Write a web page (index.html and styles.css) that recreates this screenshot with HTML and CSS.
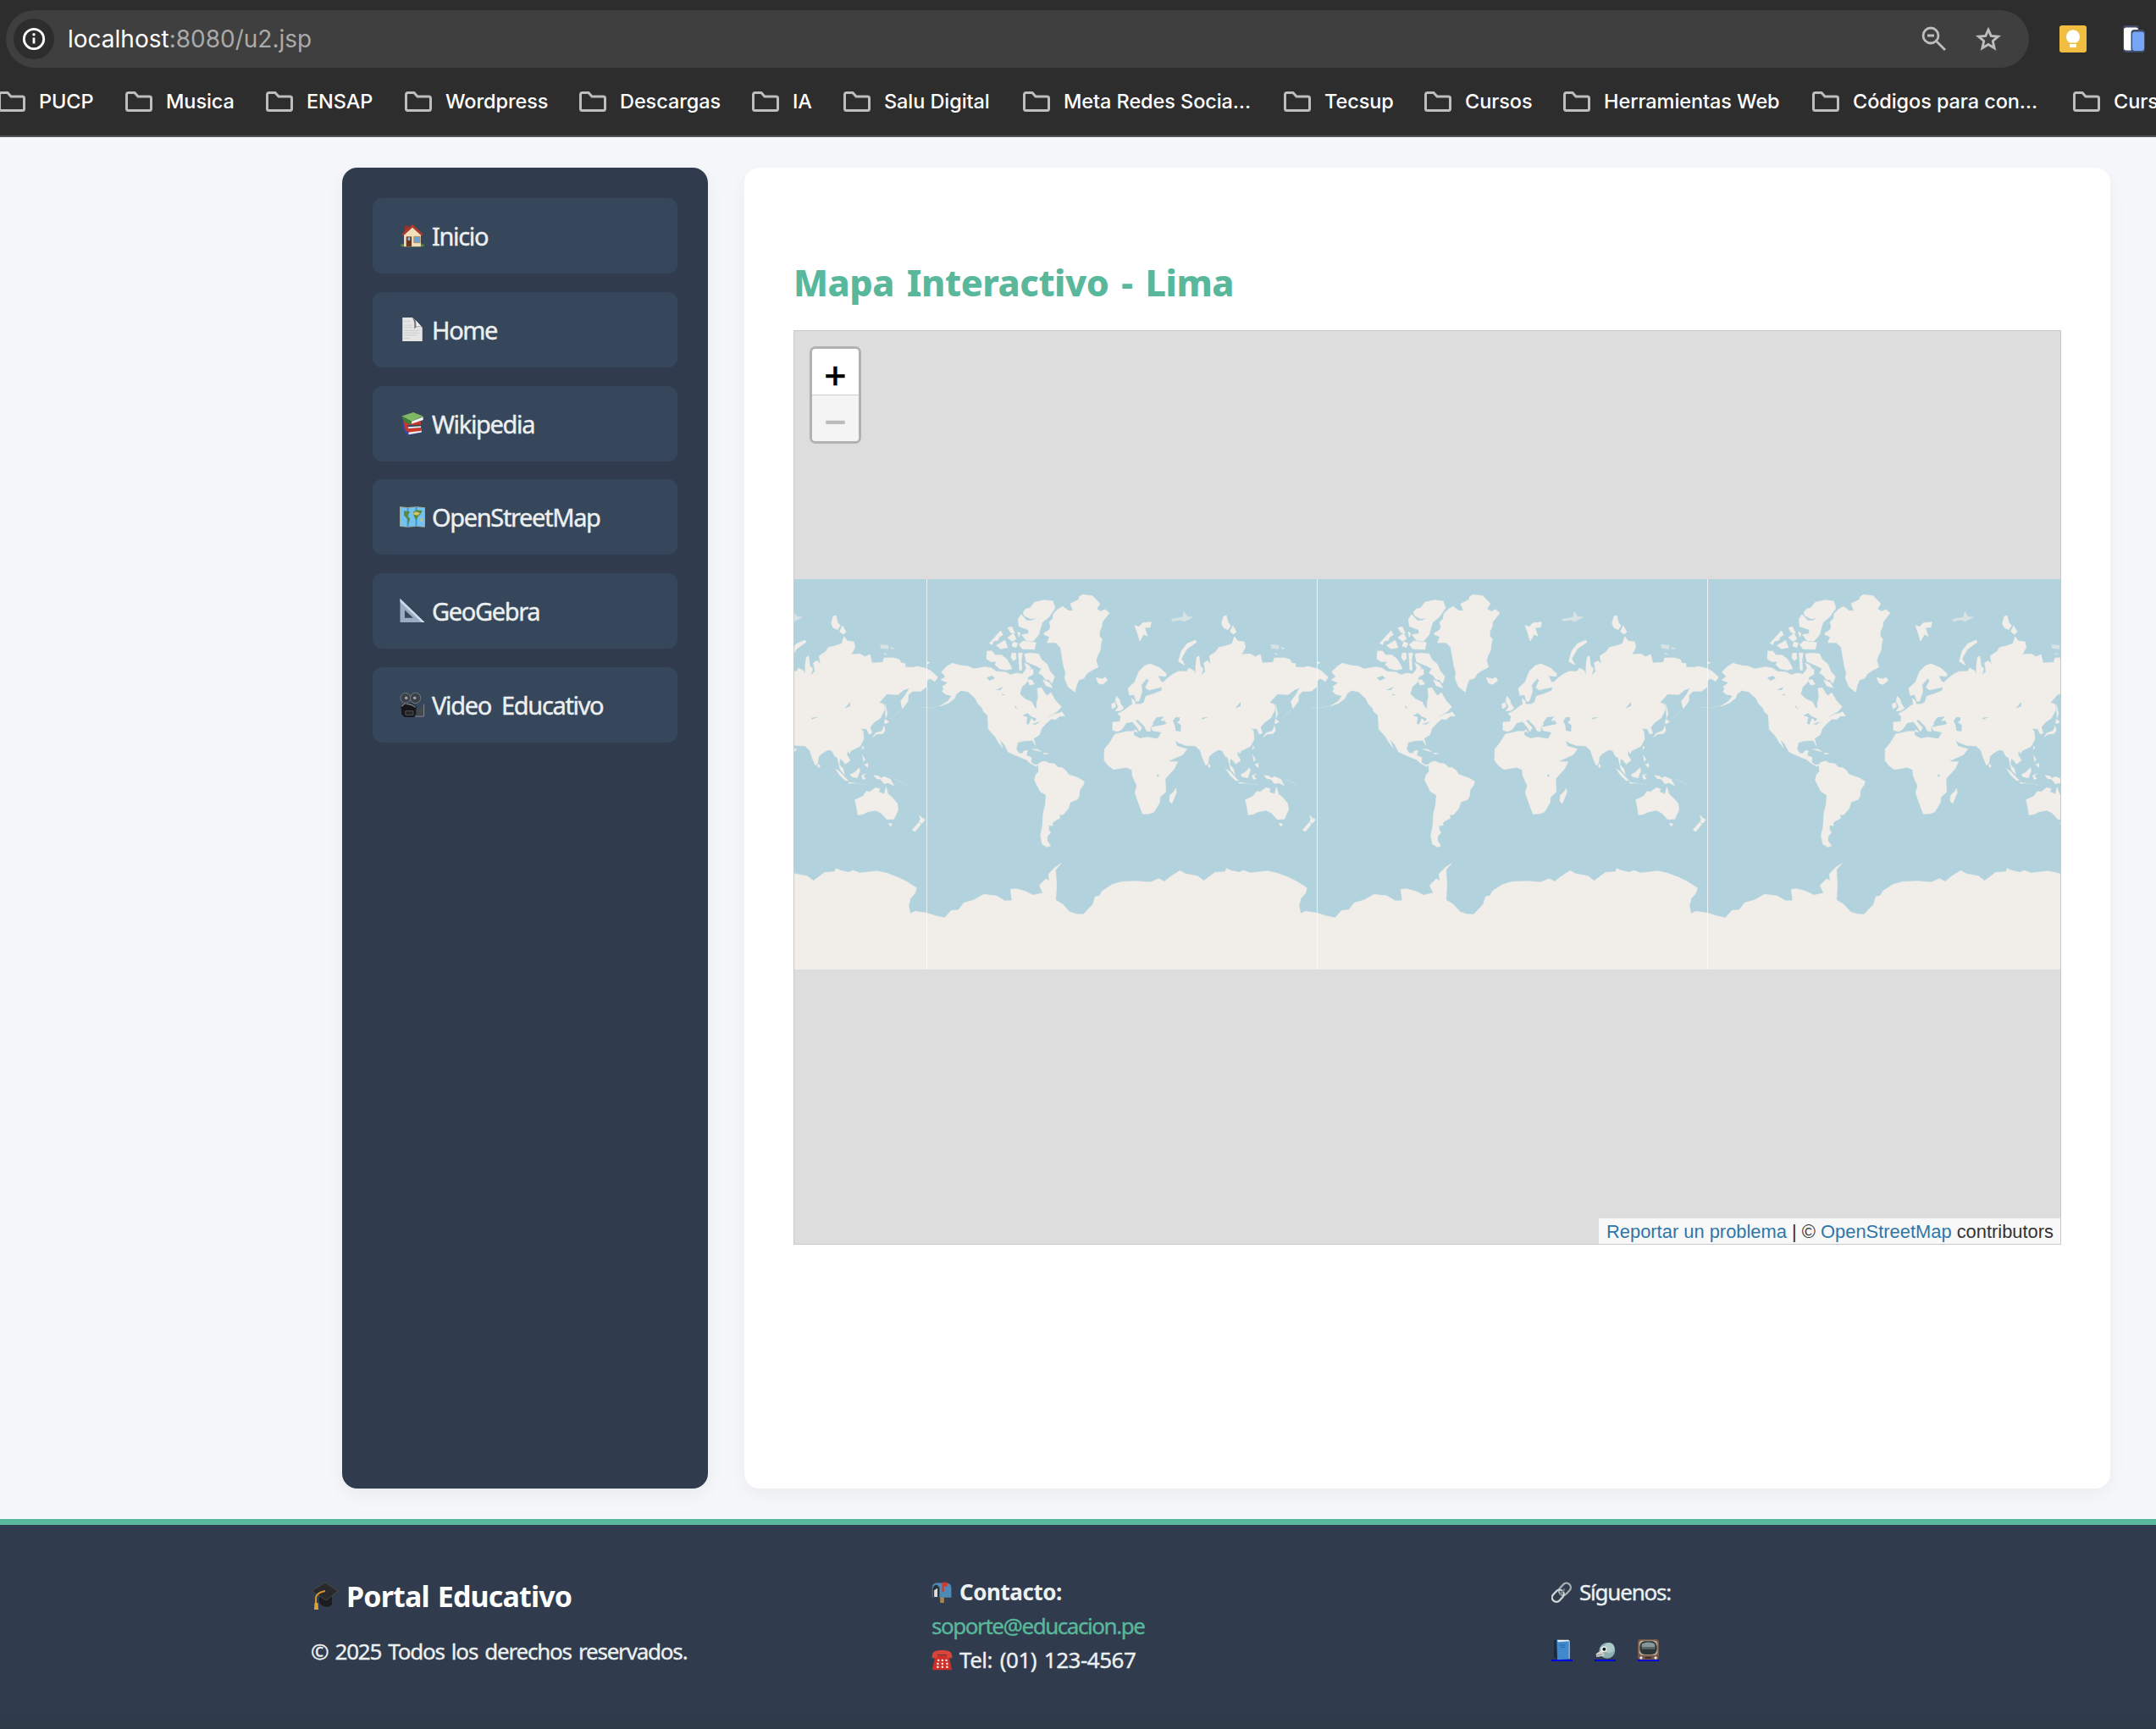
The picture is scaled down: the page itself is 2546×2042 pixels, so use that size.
FILE: index.html
```html
<!DOCTYPE html>
<html lang="es">
<head>
<meta charset="utf-8">
<title>Portal Educativo</title>
<link rel="stylesheet" href="styles.css">
</head>
<body>
<svg class="defs" aria-hidden="true">
  <symbol id="folder" viewBox="0 0 32 24"><path d="M1.5 3.5a2 2 0 0 1 2-2h7.5l4 4.500h13.500a2 2 0 0 1 2 2v12.500a2 2 0 0 1-2 2h-25a2 2 0 0 1-2-2z" fill="none" stroke="#bebebe" stroke-width="3"/></symbol>
</svg>

<header class="browser">
  <div class="toolbar">
    <div class="address">
      <span class="info"><svg width="28" height="28" viewBox="0 0 28 28"><circle cx="14" cy="14" r="11.700" fill="none" stroke="#fff" stroke-width="2.800"/><path d="M14 12.500v7" stroke="#fff" stroke-width="2.800"/><circle cx="14" cy="8.800" r="1.700" fill="#fff"/></svg></span>
      <span class="url"><b>localhost</b>:8080/u2.jsp</span>
      <svg class="lens" width="30" height="30" viewBox="0 0 30 30" fill="none" stroke="#bdbdbd" stroke-width="2.800"><circle cx="11" cy="11" r="9"/><path d="M17.500 17.500 28 28M7 11h8"/></svg>
      <svg class="star" width="32" height="30" viewBox="0 0 32 30"><path d="M16 4.200 19.200 11.400 27.500 12.200 21.300 17.500 23.100 25.800 16 21.500 8.900 25.800 10.700 17.500 4.500 12.200 12.800 11.400z" fill="none" stroke="#bdbdbd" stroke-width="2.900"/></svg>
    </div>
    <svg class="ext" width="32" height="32" viewBox="0 0 32 32"><rect width="32" height="32" rx="3" fill="#f1be42"/><path d="M12 20.500a8.100 8.100 0 1 1 8 0zM12 22h8v4h-8z" fill="#fff"/></svg>
    <svg class="device" width="26" height="32" viewBox="0 0 26 32"><rect x="0" y="0" width="19" height="32" rx="4" fill="#414c69"/><rect x="1" y="2.500" width="17" height="27" rx="3" fill="#fff"/><rect x="9.500" y="5" width="16.500" height="27" rx="4" fill="#414c69"/><rect x="11" y="7.500" width="14" height="22.500" rx="3" fill="#76a6f5"/></svg>
  </div>
  <nav class="bookmarks">
    <span><svg><use href="#folder"/></svg>PUCP</span>
    <span><svg><use href="#folder"/></svg>Musica</span>
    <span><svg><use href="#folder"/></svg>ENSAP</span>
    <span><svg><use href="#folder"/></svg>Wordpress</span>
    <span><svg><use href="#folder"/></svg>Descargas</span>
    <span><svg><use href="#folder"/></svg>IA</span>
    <span><svg><use href="#folder"/></svg>Salu Digital</span>
    <span><svg><use href="#folder"/></svg>Meta Redes Socia…</span>
    <span><svg><use href="#folder"/></svg>Tecsup</span>
    <span><svg><use href="#folder"/></svg>Cursos</span>
    <span><svg><use href="#folder"/></svg>Herramientas Web</span>
    <span><svg><use href="#folder"/></svg>Códigos para con…</span>
    <span><svg><use href="#folder"/></svg>Curs</span>
  </nav>
</header>

<div class="layout">
  <aside class="sidebar">
    <a class="item"><svg viewBox="0 0 32 32"><path d="M1 27h30v3H1z" fill="#5d8a3a"/><path d="M6 3h5v9H6z" fill="#9a3226"/><path d="M5 15 16 5l11 10v15H5z" fill="#f0dfb8"/><path d="M16 1 30 14l-2 2L16 5 4 16l-2-2z" fill="#b5392f"/><path d="M8 17h7v13H8z" fill="#6b3424"/><path d="M10 18h3v4h-3z" fill="#86bdea"/><path d="M18 17h8v8h-8z" fill="#719fd0" stroke="#ac8e65"/></svg>Inicio</a>
    <a class="item"><svg viewBox="0 0 32 32"><path d="M3 0h13l13 13v18H3z" fill="#e5e5e5"/><path d="M16 0l13 13c-4-2-8-1-11 2 1-5 1-10-2-15z" fill="#777"/><path d="M20 3l8 9c-3-1-5-1-7 0 0-3 0-6-1-9z" fill="#f3f3f3"/><path d="M5 5h8M5 10h11M5 13h11M5 17h20M5 20h20M5 23h16M5 27h8" stroke="#cacaca"/></svg>Home</a>
    <a class="item"><svg viewBox="0 0 32 32"><path d="M2 14l4 15 5 2 17-3v-3z" fill="#36479a"/><path d="M11 27l17-4v4l-17 3z" fill="#eee"/><path d="M4 12l3 12 4 3 17-2v-4l-17 1-2-4 18-1v-4z" fill="#c9372b"/><path d="M10 20l17-1v2l-16 1z" fill="#eee"/><path d="M2 6 17 1l13 5-15 7z" fill="#80b866"/><path d="M2 6l3 7 8 4 2-1V13z" fill="#3f7e39"/><path d="M15 13l15-6v4l-15 5z" fill="#f5f5f5"/></svg>Wikipedia</a>
    <a class="item"><svg viewBox="0 0 32 32"><path d="M0 3l10 1 11-1 11 1v25l-11-1-11 1-10-1z" fill="#72c3f0" stroke="#a7ae9b"/><path d="M10 4v25M21 3v25" stroke="#3c94cc" stroke-width="2"/><path d="M5 8l8 1-4 6 4 3-2 8-2-8-4-4zM17 10l4-3 8 1-3 5-3 3-2 5-3-6z" fill="#5d873e"/><path d="M17 11l4-2 5 2-3 3-5-1zM26 19l3-1v4h-2z" fill="#d8c568"/></svg>OpenStreetMap</a>
    <a class="item"><svg viewBox="0 0 32 32"><path fill-rule="evenodd" d="M0 0l32 31H0zM6 15v10h11z" fill="#9aabc2"/><path d="M0 0l32 31h-4L0 4z" fill="#cddaea"/></svg>GeoGebra</a>
    <a class="item"><svg viewBox="0 0 32 32"><circle cx="7" cy="7" r="6.500" fill="#3a4045" stroke="#798087"/><circle cx="20" cy="7" r="6.800" fill="#3a4045" stroke="#798087"/><circle cx="8" cy="7" r="2" fill="#9aa1a7"/><circle cx="19" cy="7" r="2" fill="#9aa1a7"/><path d="M1 18l4-5 10 1 6 4v9l-3 5H6l-4-4z" fill="#17171a"/><path d="M2 18l4-4 9 2 5 3" fill="none" stroke="#7c8288" stroke-width="1.500"/><path d="M7 24h10v5H7z" fill="#242427" stroke="#55585c"/><path d="M21 21l4 1 6-7v16H21l4-4h-4z" fill="#43484d"/><path d="M31 15v16H20" fill="none" stroke="#888e94"/></svg>Video Educativo</a>
  </aside>

  <main class="content">
    <h2>Mapa Interactivo - Lima</h2>
    <div class="map">
      <svg class="world" width="1495" height="461" viewBox="0 0 1495 461">
        <defs>
          <g id="tile">
            <rect width="461.200" height="461" fill="#b2d2dd"/>
            <g transform="scale(.33333) translate(-43 -43)" fill="#f1eee9" stroke="#f1eee9" stroke-width="2" stroke-linejoin="round">
              <path d="M95 372 L115 352 L133 341 L168 350 L188 351 L210 361 L250 354 L272 358 L290 370 L322 372 L340 382 L362 376 L382 380 L392 366 L400 352 L410 365 L420 362 L420 380 L402 390 L398 408 L380 425 L373 450 L392 468 L415 478 L428 502 L433 500 L433 480 L438 462 L435 430 L450 428 L460 445 L470 456 L483 445 L500 474 L510 485 L520 495 L505 512 L480 525 L466 537 L492 522 L512 518 L522 513 L532 528 L515 528 L500 540 L485 538 L465 555 L450 572 L442 595 L422 607 L428 632 L418 614 L385 616 L365 622 L360 645 L370 660 L382 661 L388 652 L400 650 L396 668 L414 675 L412 692 L425 701 L438 700 L430 706 L410 695 L395 682 L360 668 L332 655 L318 628 L300 610 L312 640 L298 622 L285 600 L262 575 L259 525 L244 512 L240 500 L225 485 L215 465 L190 442 L165 437 L148 450 L142 465 L120 482 L90 493 L118 476 L132 456 L108 450 L98 440 L105 430 L98 425 L118 410 L94 400 L110 388Z"/>
              <path d="M438 700 L445 692 L462 688 L475 695 L495 697 L508 710 L522 711 L535 720 L545 735 L580 747 L601 760 L598 772 L585 790 L583 812 L576 824 L552 833 L545 855 L527 877 L512 878 L515 890 L495 900 L488 908 L490 916 L475 915 L475 930 L482 940 L470 955 L470 970 L482 988 L470 992 L452 982 L446 950 L453 920 L456 870 L463 845 L466 808 L445 795 L435 775 L425 755 L430 735 L440 725Z"/>
              <path d="M458 235 L478 222 L482 210 L477 195 L490 183 L492 165 L510 148 L525 140 L545 155 L562 155 L552 130 L582 115 L583 106 L595 98 L630 102 L657 130 L645 148 L660 158 L675 150 L690 163 L665 195 L663 212 L655 230 L655 245 L664 255 L660 275 L658 295 L648 315 L643 330 L650 355 L630 365 L610 378 L600 394 L582 400 L574 418 L568 443 L545 425 L532 395 L535 375 L528 350 L517 285 L500 268 L470 268 L478 247 L460 240Z"/>
              <path d="M385 160 L395 148 L410 145 L425 125 L460 117 L490 121 L498 145 L475 178 L453 195 L445 220 L440 240 L420 263 L395 260 L380 240 L405 236 L403 222 L370 210 L367 185 L378 168 L398 190 L415 190 L435 180 L410 183 L388 172Z"/>
              <path d="M265 270 L305 226 L313 240 L300 248 L295 260 L280 262 L275 275Z M290 278 L320 260 L330 285 L305 290Z M330 215 L345 212 L355 235 L340 232Z M330 250 L350 235 L360 255 L345 263Z M350 265 L365 270 L360 285 L345 280Z M370 275 L385 262 L430 268 L425 292 L382 290Z M365 230 L375 235 L370 248Z M257 298 L275 298 L285 312 L308 312 L325 325 L335 340 L345 360 L325 365 L300 360 L285 345 L292 335 L270 335 L255 325Z M345 305 L358 305 L360 325 L350 332 L342 320Z M368 305 L382 305 L378 330 L380 365 L372 365Z M390 308 L410 305 L440 308 L450 328 L470 345 L480 370 L496 388 L487 412 L475 398 L465 400 L455 385 L440 375 L450 360 L430 350 L395 335Z M400 400 L415 400 L424 415 L408 418Z M455 400 L478 410 L488 428 L465 420Z M390 340 L405 348 L415 362 L395 355Z"/>
              <path d="M643 392 L665 397 L676 390 L683 402 L665 416 L651 411Z M780 207 L795 212 L808 198 L838 195 L835 213 L815 215 L825 245 L812 238 L798 262 L790 235Z M935 335 L945 298 L965 272 L995 259 L999 266 L965 290 L952 312 L945 325 L957 347Z M1088 200 L1095 175 L1105 172 L1110 195 L1120 208 L1110 222 L1095 215Z M1118 228 L1128 208 L1140 230 L1130 238Z"/>
              <path d="M910 185 L950 178 L955 158 L965 175 L985 178 L955 193 L940 187 L915 192Z M1262 275 L1290 278 L1290 290 L1265 288Z M1298 284 L1312 289 L1302 291Z M1275 305 L1286 310 L1277 310Z" opacity=".6"/>
              <path d="M756 430 L780 408 L795 370 L815 350 L835 343 L852 350 L870 358 L892 378 L890 388 L862 384 L872 405 L882 410 L877 425 L845 432 L830 436 L818 427 L830 402 L823 394 L803 418 L806 440 L795 475 L785 476 L778 452 L762 455Z"/>
              <path d="M715 458 L725 468 L730 485 L741 500 L730 508 L712 510 L722 495 L712 475Z M698 485 L710 480 L712 495 L700 502Z"/>
              <path d="M702 550 L728 548 L730 528 L720 520 L742 508 L762 492 L772 487 L770 465 L780 475 L782 486 L800 486 L813 480 L820 458 L845 450 L875 438 L880 410 L895 395 L915 380 L935 370 L965 370 L972 358 L990 368 L996 385 L996 350 L1000 320 L1008 315 L1012 350 L1022 360 L1015 385 L1030 370 L1025 340 L1038 332 L1050 345 L1045 315 L1068 300 L1078 285 L1100 280 L1125 272 L1133 247 L1145 262 L1168 265 L1172 285 L1158 310 L1190 308 L1207 318 L1225 310 L1232 340 L1270 338 L1275 322 L1310 322 L1330 328 L1335 340 L1350 342 L1350 355 L1380 356 L1392 352 L1426 360 L1426 424 L1405 440 L1375 440 L1360 455 L1360 475 L1340 502 L1334 475 L1350 455 L1365 428 L1345 435 L1325 452 L1285 450 L1258 480 L1275 487 L1277 505 L1262 535 L1240 550 L1225 568 L1232 588 L1222 592 L1213 573 L1190 572 L1200 580 L1203 610 L1190 635 L1160 650 L1145 652 L1143 665 L1155 685 L1138 698 L1128 685 L1118 678 L1116 700 L1130 715 L1135 735 L1120 718 L1110 675 L1100 670 L1090 650 L1075 648 L1055 660 L1043 672 L1040 695 L1032 703 L1020 675 L1012 650 L995 634 L960 632 L935 622 L922 613 L930 635 L948 640 L965 645 L950 665 L905 685 L885 655 L865 620 L862 608 L875 585 L845 580 L838 568 L880 560 L893 555 L885 542 L865 550 L852 540 L843 560 L835 568 L835 583 L822 580 L815 565 L790 540 L783 545 L805 570 L797 583 L790 570 L772 548 L750 552 L735 575 L720 583 L702 578Z"/>
              <path d="M710 592 L735 587 L750 583 L775 582 L778 597 L800 608 L812 605 L825 603 L866 610 L872 630 L888 655 L905 690 L932 690 L920 715 L888 750 L890 797 L870 815 L868 835 L848 868 L830 874 L808 875 L795 840 L781 800 L788 775 L772 740 L770 718 L750 710 L705 717 L685 702 L672 685 L673 645 L690 625Z M905 808 L920 795 L925 785 L928 798 L912 837 L903 830Z"/>
              <path d="M1172 825 L1200 812 L1212 795 L1225 797 L1245 782 L1260 786 L1256 797 L1276 805 L1282 780 L1290 805 L1305 818 L1322 838 L1325 860 L1310 893 L1285 894 L1265 872 L1245 862 L1215 868 L1200 876 L1182 878 L1178 850Z M1291 908 L1304 910 L1298 919Z M1400 880 L1410 890 L1420 895 L1410 908 L1400 904 L1404 893Z M1398 905 L1405 912 L1385 937 L1375 932Z M1042 698 L1048 705 L1044 711 L1040 706Z"/>
              <path d="M1102 714 L1118 725 L1148 757 L1138 757 L1118 738Z M1155 735 L1170 728 L1187 711 L1190 722 L1180 748 L1160 743Z M1150 762 L1172 766 L1150 767Z M1195 738 L1212 732 L1202 740 L1210 750 L1200 753Z M1238 738 L1255 740 L1265 748 L1275 742 L1298 752 L1310 775 L1290 765 L1275 768 L1262 752 L1248 750Z M1198 665 L1208 682 L1202 690Z M1205 700 L1218 695 L1218 711Z M1234 604 L1245 588 L1268 580 L1275 562 L1279 580 L1270 591 L1250 592Z M1275 552 L1280 538 L1292 549 L1280 555Z M1279 485 L1287 520 L1281 535Z M1145 650 L1158 651 L1152 662Z M1198 635 L1204 638 L1197 648Z M415 645 L435 645 L450 655 L430 650Z M455 658 L475 661 L460 664Z M775 585 L782 575 L792 585 L782 583Z" stroke-width="1"/>
              <path d="M43 1226 L75 1236 L107 1243 L130 1217 L155 1215 L175 1190 L210 1180 L245 1160 L290 1165 L320 1183 L345 1182 L340 1142 L360 1140 L395 1150 L420 1163 L455 1155 L442 1128 L465 1105 L478 1112 L475 1088 L497 1065 L520 1050 L500 1072 L503 1130 L500 1180 L525 1195 L550 1222 L575 1230 L598 1231 L632 1195 L640 1168 L655 1165 L665 1148 L700 1125 L735 1115 L790 1113 L835 1117 L865 1104 L885 1115 L905 1098 L940 1076 L960 1087 L1003 1095 L1025 1112 L1065 1082 L1100 1080 L1105 1068 L1120 1075 L1150 1082 L1165 1075 L1190 1084 L1250 1077 L1285 1085 L1325 1100 L1355 1115 L1390 1137 L1385 1155 L1368 1175 L1362 1200 L1368 1228 L1385 1220 L1426 1226 V1426 H43Z"/>
              <path d="M43 360 L60 370 L82 390 L72 405 L55 395 L43 402Z M43 337 L54 338 L46 343Z"/>
              <path d="M20 497 L60 499 L90 491 M1170 766 L1215 771 M1298 540 L1335 505 M1310 750 L1358 773" fill="none" opacity=".45"/>
              <g fill="#b2d2dd" stroke="none"><path d="M915 545 L925 532 L940 533 L938 545 L930 550 L944 560 L943 583 L925 580 L922 560Z M843 553 L858 532 L884 530 L872 543 L893 555 L870 560Z M255 392 L275 385 L285 394 L266 403Z M288 436 L314 424 L305 436Z M353 488 L366 505 L356 498Z M382 526 L400 518 L414 530 L432 537 L425 548 L414 535 L404 558 L396 555 L400 532Z M415 557 L444 547 L430 558Z M1135 502 L1155 478 L1155 492Z M1017 534 L1042 531 L1019 540Z M862 732 L867 740 L857 744Z M308 450 L324 452 L310 455Z"/></g>
            </g>
          </g>
        </defs>
        <use href="#tile" x="-304.700"/><use href="#tile" x="156.300"/><use href="#tile" x="617.300"/><use href="#tile" x="1078.300"/>
        <path d="M156.500 0v461M617.500 0v461M1078.500 0v461" stroke="#fff" stroke-opacity=".7"/>
      </svg>
      <div class="zoom"><a>+</a><a class="off">−</a></div>
      <div class="credit"><a>Reportar un problema</a> | © <a>OpenStreetMap</a> contributors</div>
    </div>
  </main>
</div>

<footer class="footer">
  <section>
    <h3><svg viewBox="0 0 32 32"><path d="M10 17v7c5 6 12 6 15 2V13z" fill="#1c1c1e"/><path d="M1 10 17 0l15 10-14 11z" fill="#29292b" stroke="#48484b"/><path d="M17 10c-6 1-10 3-11 8v8" fill="none" stroke="#d7942e" stroke-width="2"/><path d="M4.500 24h4l.5 8H4z" fill="#e0a03a"/></svg>Portal Educativo</h3>
    <p>© 2025 Todos los derechos reservados.</p>
  </section>
  <section>
    <p><svg viewBox="0 0 32 32"><path d="M13 22h6v10h-6z" fill="#a78353"/><path d="M1 8q1-6 7-6h14q8 0 8 8v14H1z" fill="#4f8ab5"/><path d="M2 24V9q5-9 10 0v15z" fill="#293139"/><path d="M4 23V13l5-3v13z" fill="#ddd"/><path d="M16 15V1h8v6h-5v8z" fill="#d6372c"/></svg><strong>Contacto:</strong></p>
    <p><a class="mail">soporte@educacion.pe</a></p>
    <p class="tel"><svg viewBox="0 0 32 32"><path d="M6 9h20l5 22H1z" fill="#cb2f28"/><path d="M1 9q0-8 15-8t15 8v4h-8V8H9v5H1z" fill="#d94438"/><path d="M9 15h3v3H9zm6 0h3v3h-3zm6 0h3v3h-3zM8 20h3v3H8zm7 0h3v3h-3zm7 0h3v3h-3zM8 25h3v3H8zm7 0h3v3h-3zm7 0h3v3h-3z" fill="#f5dfdc"/></svg>Tel: (01) 123-4567</p>
  </section>
  <section>
    <p><svg viewBox="0 0 32 32" fill="none" stroke-width="3"><rect x="14" y="1" width="13" height="20" rx="6.500" transform="rotate(43 20 11)" stroke="#a4abb0"/><rect x="4" y="12" width="13" height="20" rx="6.500" transform="rotate(43 11 21)" stroke="#d1d5d8"/><path d="M13 20l7-9" stroke="#777d82"/></svg>Síguenos:</p>
    <div class="social">
      <a><svg viewBox="0 0 32 32"><path d="M4 2l5-1v29l-5-3z" fill="#172a40"/><path d="M8 1l20 2v27l-19 1z" fill="#4189ce"/><path d="M9 1h17l2 2-18 1z" fill="#e9edf0"/><path d="M27 3v26" stroke="#c8daeb"/><path d="M12 9h9M14 12h6" stroke="#215d99"/></svg></a>
      <a><svg viewBox="0 0 32 32"><circle cx="19" cy="17" r="12" fill="#8eafb0"/><circle cx="22" cy="13" r="8" fill="#accaca"/><path d="M11 16 2 22l1 5 12-2z" fill="#d4d3cf"/><path d="M3 24l9-1" stroke="#777"/><circle cx="14" cy="15" r="4.500" fill="#edf3f1"/><circle cx="14.500" cy="15" r="2.500" fill="#161919"/></svg></a>
      <a><svg viewBox="0 0 32 32"><rect width="32" height="31" y="0" rx="4" fill="#77564a"/><rect x="2" y="2" width="28" height="22" rx="5" fill="#b9ab98"/><rect x="3" y="3" width="26" height="20" rx="8" fill="#2c3537"/><path d="M6 7q10-5 20 0v5H6z" fill="#87989a"/><path d="M6 12h20v3H6z" fill="#59686b"/><path d="M11 28h10" stroke="#302722" stroke-width="2"/><circle cx="5" cy="28" r="2" fill="#eee"/><circle cx="27" cy="28" r="2" fill="#eee"/></svg></a>
    </div>
  </section>
</footer>
</body>
</html>
```

FILE: styles.css
```css
* { box-sizing: border-box; }
body { margin: 0; width: 2546px; height: 2042px; overflow: hidden; display: flex; flex-direction: column; background: #f5f7fb; font-family: "Noto Sans", sans-serif; }
svg { display: block; flex: none; }
.defs { display: none; }

/* Browser chrome */
.browser { height: 162px; flex: none; background: #2d2d2d; border-bottom: 2px solid #555; padding-top: 12px; font-family: Inter, sans-serif; }
.toolbar { display: flex; align-items: center; padding-left: 7px; height: 68px; }
.address { width: 2389px; height: 68px; border-radius: 34px; background: #3f3f3f; display: flex; align-items: center; padding-left: 9px; }
.info { width: 48px; height: 48px; border-radius: 50%; background: #2d2d2d; display: grid; place-items: center; }
.url { margin: 0 auto 0 16px; font-size: 28px; color: #aaa; letter-spacing: 0; }
.url b { font-weight: 400; color: #fff; }
.lens { margin-right: 33px; }
.star { margin-right: 32px; }
.ext { margin-left: 36px; }
.device { margin-left: 43px; }
.bookmarks { display: grid; grid-template-columns: 150px 166px 164px 206px 204px 108px 212px 308px 166px 164px 294px 308px 150px; margin-left: -2px; margin-top: 24px; height: 32px; align-items: center; overflow: hidden; color: #fff; font-size: 23.500px; font-weight: 500; letter-spacing: -.08px; white-space: nowrap; }
.bookmarks span { display: flex; align-items: center; gap: 16px; line-height: 30px; }
.bookmarks svg { width: 32px; height: 24px; }

/* Page body */
.layout { display: flex; gap: 43px; padding: 36px 54px 36px 404px; height: 1632px; flex: none; }
.sidebar { width: 432px; flex: none; background: #303c4d; border-radius: 18px; padding: 36px; display: flex; flex-direction: column; gap: 21.800px; box-shadow: 0 7px 22px rgba(0,0,0,.06); }
.item { height: 89px; flex: none; border-radius: 11px; background: #37475b; color: #ecf0f1; display: flex; align-items: center; gap: 8px; padding: 0 0 0 32px; font-size: 29px; letter-spacing: -1.350px; word-spacing: 6px; -webkit-text-stroke: .4px currentColor; }
.item svg { width: 30px; height: 29px; }
.content { flex: 1; background: #fff; border-radius: 18px; padding: 100px 58px; box-shadow: 0 7px 22px rgba(0,0,0,.05); }
h2 { margin: 0 0 20px; height: 72px; line-height: 72px; font-size: 43px; font-weight: 800; color: #59b89c; letter-spacing: -.5px; word-spacing: 4.300px; white-space: nowrap; }
.map { position: relative; height: 1080px; border: 1px solid #c8c8c8; background: #ddd; padding-top: 293px; overflow: hidden; }
.zoom { position: absolute; left: 18px; top: 18px; width: 61px; height: 115px; border: 3px solid #b1b1b1; border-radius: 7px; overflow: hidden; }
.zoom a { display: block; height: 55px; line-height: 61px; text-align: center; font-size: 46px; font-weight: 500; color: #000; background: #fff; border-bottom: 1px solid #ccc; -webkit-text-stroke: .5px currentColor; }
.zoom .off { background: #f4f4f4; color: #bbb; border: 0; }
.credit { position: absolute; right: 0; bottom: 0; width: 545px; height: 30px; padding-left: 9px; background: #f8f8f8; color: #333; font: 21.900px/31px "Liberation Sans", sans-serif; white-space: nowrap; }
.credit a { color: #2f76a9; }

/* Footer */
.footer { flex: 1; border-top: 7px solid #59b89c; background: linear-gradient(#303c4d 85%, #2e3948); display: grid; grid-template-columns: 733px 732px 1fr; padding: 59px 0 0 367px; color: #ecf0f1; font-size: 26px; }
.footer p { margin: 0; height: 40px; display: flex; align-items: center; gap: 8px; white-space: nowrap; letter-spacing: -1.200px; word-spacing: 2.500px; -webkit-text-stroke: .35px currentColor; }
.footer p strong { letter-spacing: -.450px; -webkit-text-stroke: 0; }
.footer .tel { letter-spacing: -.5px; word-spacing: 2.500px; }
.footer p .mail { letter-spacing: -1.450px; }
.footer p svg { width: 25px; height: 25px; }
.footer h3 { margin: 0 0 20px; height: 50px; display: flex; align-items: center; gap: 10px; font-size: 34px; font-weight: 700; color: #fff; letter-spacing: -.850px; word-spacing: 2px; }
.footer h3 svg { width: 32px; height: 32px; }
.mail { color: #59b89c; }
.social { display: flex; gap: 26px; margin-top: 36px; }
.social a { height: 26px; border-bottom: 2px solid #0000e0; }
.social svg { width: 25px; height: 25px; }
```
